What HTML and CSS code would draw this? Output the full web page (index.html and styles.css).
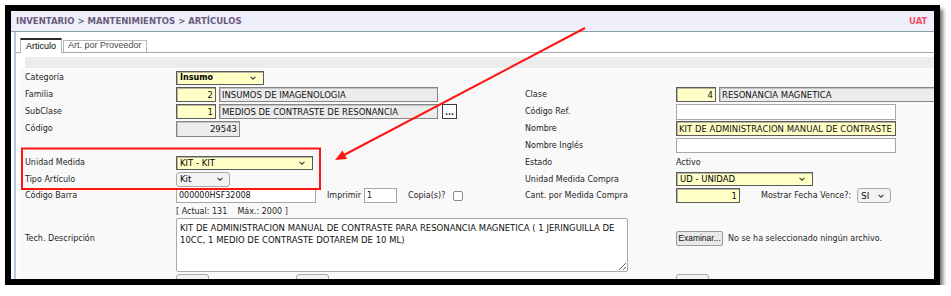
FILE: index.html
```html
<!DOCTYPE html>
<html>
<head>
	<title>Artículos</title>
	<meta charset="utf-8">
	<link rel="stylesheet" href="styles.css">
</head>
<body>
	<div class="frame">
		<div class="topbar">
			<span class="crumb">INVENTARIO &gt; MANTENIMIENTOS &gt; ARTÍCULOS</span>
			<span class="env">UAT</span>
		</div>

		<div class="panel">
			<div class="tabs">
				<span class="tab active">Articulo</span>
				<span class="tab">Art. por Proveedor</span>
			</div>
			<div class="strip"></div>

			<div class="form">
				<!-- fila 1 -->
				<span class="lbl">Categoría</span>
				<div class="fld">
					<div class="sel req w88"><span class="strong">Insumo</span><svg class="chev" viewBox="0 0 7 4"><path d="M.6 .6 3.5 3.4 6.4 .6"/></svg></div>
				</div>
				<span></span>
				<span></span>

				<!-- fila 2 -->
				<span class="lbl">Familia</span>
				<div class="fld">
					<input class="inp req num w40" value="2">
					<input class="inp ro w219" value="INSUMOS DE IMAGENOLOGIA">
				</div>
				<span class="lbl">Clase</span>
				<div class="fld">
					<input class="inp req num w40" value="4">
					<input class="inp ro w219" value="RESONANCIA MAGNETICA">
				</div>

				<!-- fila 3 -->
				<span class="lbl">SubClase</span>
				<div class="fld">
					<input class="inp req num w40" value="1">
					<input class="inp ro w219" value="MEDIOS DE CONTRASTE DE RESONANCIA">
					<span class="dots">...</span>
				</div>
				<span class="lbl">Código Ref.</span>
				<div class="fld"><input class="inp w220 tall" value=""></div>

				<!-- fila 4 -->
				<span class="lbl">Código</span>
				<div class="fld"><input class="inp ro num w64 tall" value="29543"></div>
				<span class="lbl">Nombre</span>
				<div class="fld"><input class="inp req w220" value="KIT DE ADMINISTRACION MANUAL DE CONTRASTE PARA RESONANCIA MAGNETICA"></div>

				<!-- fila 5 -->
				<span></span>
				<span></span>
				<span class="lbl">Nombre Inglés</span>
				<div class="fld"><input class="inp w220" value=""></div>

				<!-- fila 6 -->
				<span class="lbl">Unidad Medida</span>
				<div class="fld">
					<div class="sel req w137"><span>KIT - KIT</span><svg class="chev" viewBox="0 0 7 4"><path d="M.6 .6 3.5 3.4 6.4 .6"/></svg></div>
				</div>
				<span class="lbl">Estado</span>
				<span class="lbl">Activo</span>

				<!-- fila 7 -->
				<span class="lbl">Tipo Artículo</span>
				<div class="fld">
					<div class="sel soft w54"><span>Kit</span><svg class="chev" viewBox="0 0 7 4"><path d="M.6 .6 3.5 3.4 6.4 .6"/></svg></div>
				</div>
				<span class="lbl">Unidad Medida Compra</span>
				<div class="fld">
					<div class="sel req w137"><span>UD - UNIDAD</span><svg class="chev" viewBox="0 0 7 4"><path d="M.6 .6 3.5 3.4 6.4 .6"/></svg></div>
				</div>

				<!-- fila 8 -->
				<span class="lbl">Código Barra</span>
				<div class="fld">
					<input class="inp small w140" value="000000HSF32008">
					<span class="lbl gap11">Imprimir</span>
					<input class="inp small w33" value="1">
					<span class="lbl gap10">Copia(s)?</span>
					<span class="check"></span>
				</div>
				<span class="lbl">Cant. por Medida Compra</span>
				<div class="fld">
					<input class="inp req num w64" value="1">
					<span class="lbl gap21">Mostrar Fecha Vence?:</span>
					<div class="sel soft w34 gap4"><span>SI</span><svg class="chev" viewBox="0 0 7 4"><path d="M.6 .6 3.5 3.4 6.4 .6"/></svg></div>
				</div>

				<!-- fila 9 -->
				<span class="lbl">Tech. Descripción</span>
				<div class="fld col">
					<span class="counter">[ Actual: 131&nbsp;&nbsp;&nbsp; Máx.: 2000 ]</span>
					<textarea class="desc">KIT DE ADMINISTRACION MANUAL DE CONTRASTE PARA RESONANCIA MAGNETICA ( 1 JERINGUILLA DE
10CC, 1 MEDIO DE CONTRASTE DOTAREM DE 10 ML)</textarea>
				</div>
				<span></span>
				<div class="fld">
					<span class="btn">Examinar...</span>
					<span class="lbl">No se ha seleccionado ningún archivo.</span>
				</div>

				<!-- fila 10 (cortada) -->
				<span></span>
				<div class="fld top">
					<span class="stub w33"></span>
					<span class="stub w33 gap84"></span>
				</div>
				<span></span>
				<div class="fld top"><span class="stub w33"></span></div>
			</div>
		</div>

		<!-- anotaciones en rojo -->
		<svg class="marks" width="923" height="268" viewBox="0 0 923 268">
			<rect x="11" y="137.5" width="298" height="40.5" fill="none" stroke="#ff1414" stroke-width="2"/>
			<line x1="574" y1="17" x2="333" y2="144" stroke="#ff1414" stroke-width="2"/>
			<polygon points="324,149 336,148 331.5,139.5" fill="#ff1414"/>
		</svg>
	</div>
</body>
</html>
```

FILE: styles.css
```css
body{
	margin: 0;
	background-color: #ffffff;
	font-family: "DejaVu Sans", Verdana, sans-serif;
	font-size: 8px;
	color: #1e1e1e;
}

/* marco negro con sombra */
.frame{
	position: relative;
	margin: 5px 0 0 5px;
	width: 923px;
	height: 268px;
	border: 6px solid #000000;
	background-color: #ffffff;
	overflow: hidden;
	box-shadow: 3px 4px 4px rgba(0, 0, 0, 0.55);
}

/* barra superior */
.topbar{
	display: flex;
	align-items: center;
	height: 20px;
	padding-left: 5px;
	background-color: #efeffb;
	border-bottom: 1px solid #86a3ad;
	font-size: 8.5px;
	font-weight: bold;
}
.crumb{
	flex: 1;
	color: #6a5b7b;
}
.env{
	flex: none;
	width: 25px;
	white-space: nowrap;
	color: #f24d66;
}

.panel{
	margin-left: 3px;
	border-left: 2px solid #b6cadb;
}

/* pestañas */
.tabs{
	display: flex;
	align-items: flex-end;
	height: 20px;
	padding-left: 4px;
	border-bottom: 1px solid #a9a9a9;
	font-family: "Liberation Sans", Arial, sans-serif;
	font-size: 9px;
}
.tab{
	height: 11px;
	line-height: 9px;
	padding: 0 4px;
	margin-left: 1px;
	border: 1px solid #b8b8b8;
	border-bottom: none;
	background-color: #ffffff;
	color: #4a4a4a;
}
.tab.active{
	height: 13px;
	line-height: 13px;
	padding: 0 5px;
	margin-left: 0;
	margin-bottom: -1px;
	border-top: 2px solid #2b2b2b;
	color: #000000;
}

.strip{
	height: 11px;
	margin: 4px 0 0 9px;
	background-color: #ececec;
}

/* formulario */
.form{
	display: grid;
	grid-template-columns: 151px 349px 151px 1fr;
	grid-template-rows: 17px 17px 17px 17px 17px 17px 16px 17px 69px 20px;
	align-items: center;
	margin: 1px 0 0 4px;
	padding-left: 5px;
	background-color: #faf9fa;
}
.lbl{
	white-space: nowrap;
}
.fld{
	display: flex;
	align-items: center;
	gap: 3px;
}
.fld.col{
	flex-direction: column;
	align-items: flex-start;
	gap: 0;
}
.fld.top{
	align-self: start;
	margin-top: 1px;
}

.inp{
	box-sizing: border-box;
	height: 15px;
	margin: 0;
	padding: 0 2px;
	border: 1px solid #a6a6a6;
	background-color: #ffffff;
	font-family: "DejaVu Sans", Verdana, sans-serif;
	font-size: 8.5px;
	color: #111111;
	outline: none;
}
.inp.small{
	font-size: 8px;
}
.inp.tall{
	height: 16px;
}
.req{
	background-color: #ffffc6;
	border: 1px solid #5a5a5a;
	box-shadow: inset 1px 1px 0 #b5b5a0;
}
.ro{
	background-color: #ececec;
	border: 1px solid #858585;
	box-shadow: inset 1px 1px 0 #c4c4c4;
}
.num{
	text-align: right;
}

.w33{ width: 33px; }
.w34{ width: 34px; }
.w40{ width: 40px; }
.w54{ width: 54px; }
.w64{ width: 64px; }
.w88{ width: 88px; }
.w137{ width: 137px; }
.w140{ width: 140px; }
.w219{ width: 219px; }
.w220{ width: 220px; }

.gap4{ margin-left: 3px; }
.gap10{ margin-left: 8px; }
.gap11{ margin-left: 8px; }
.gap21{ margin-left: 18px; }
.gap84{ margin-left: 84px; }

/* selects dibujados */
.sel{
	display: flex;
	align-items: center;
	justify-content: space-between;
	box-sizing: border-box;
	height: 14px;
	padding: 0 7px 0 3px;
	font-size: 8.5px;
	color: #000000;
}
.sel.soft{
	height: 15px;
	padding-right: 6px;
	border: 1px solid #a9a9a9;
	border-radius: 3px;
	background-color: #f3f3f3;
}
.strong{
	font-weight: bold;
	font-size: 8px;
}
.chev{
	width: 6px;
	height: 4px;
	fill: none;
	stroke: #3a3a3a;
	stroke-width: 1.2;
}

.dots{
	box-sizing: border-box;
	width: 15px;
	height: 15px;
	margin-left: 1px;
	border: 1px solid #3c3c3c;
	background-color: #ffffff;
	font-weight: bold;
	font-size: 8px;
	line-height: 15px;
	text-align: center;
}

.check{
	box-sizing: border-box;
	width: 10px;
	height: 10px;
	margin-left: 5px;
	border: 1px solid #8a8a8a;
	border-radius: 2px;
	background-color: #ffffff;
}

.counter{
	padding-top: 1px;
	line-height: 12px;
	white-space: nowrap;
}
.desc{
	box-sizing: border-box;
	width: 452px;
	height: 54px;
	margin: 0;
	padding: 3px 3px;
	border: 1px solid #a9a9a9;
	border-radius: 2px;
	background-color: #ffffff;
	font-family: "DejaVu Sans", Verdana, sans-serif;
	font-size: 8.5px;
	line-height: 12px;
	color: #111111;
	white-space: pre;
	overflow: hidden;
	outline: none;
}

.btn{
	box-sizing: border-box;
	width: 47px;
	height: 15px;
	margin-right: 2px;
	border: 1px solid #9b9b9b;
	border-radius: 2px;
	background-color: #e9e9e9;
	font-family: "Liberation Sans", Arial, sans-serif;
	font-size: 8.5px;
	line-height: 13px;
	text-align: center;
	color: #111111;
}

.stub{
	box-sizing: border-box;
	height: 14px;
	border: 1px solid #a9a9a9;
	border-radius: 3px;
	background-color: #f3f3f3;
}

/* marcas rojas encima del formulario */
.marks{
	position: absolute;
	left: 0;
	top: 0;
	pointer-events: none;
}
```
